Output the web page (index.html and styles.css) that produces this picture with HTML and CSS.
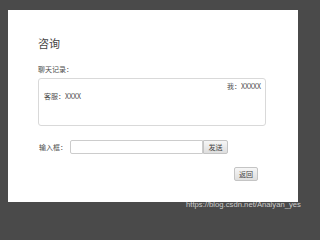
FILE: index.html
```html
<!DOCTYPE html>
<html lang="zh">
<head>
<meta charset="utf-8">
<link rel="stylesheet" href="styles.css">
</head>
<body>
<div class="panel">
  <div class="title">咨询</div>
  <div class="label">聊天记录：</div>
  <div class="chat">
    <div class="msg me">我：XXXXX</div>
    <div class="msg">客服：XXXX</div>
  </div>
  <div class="row">
    <span class="row-label">输入框：</span>
    <input class="input" type="text">
    <button class="btn">发送</button>
  </div>
  <button class="btn back">返回</button>
</div>
<div class="watermark">https://blog.csdn.net/Anaiyan_yes</div>
</body>
</html>
```
FILE: styles.css
```css
html, body {
  margin: 0;
  padding: 0;
  background: #4a4a4a;
  font-family: "Noto Sans CJK SC", "Liberation Sans", sans-serif;
  color: #4d4d4d;
}
body {
  position: relative;
  width: 307px;
  height: 213px;
  overflow: hidden;
}
.panel {
  margin: 10px 0 0 8px;
  width: 290px;
  height: 192px;
  background: #fff;
  box-sizing: border-box;
  padding: 26px 0 0 30px;
  display: flex;
  flex-direction: column;
  align-items: flex-start;
}
.title {
  font-size: 11px;
  line-height: 14px;
  color: #444;
}
.label {
  margin-top: 14px;
  font-size: 7px;
  line-height: 10px;
}
.chat {
  margin-top: 4px;
  width: 228px;
  height: 48px;
  box-sizing: border-box;
  border: 1px solid #d9d9d9;
  border-radius: 3px;
  padding: 2px 4px 0 5px;
  font-size: 7px;
  line-height: 10px;
}
.msg.me {
  text-align: right;
}
.row {
  margin-top: 14px;
  display: flex;
  align-items: center;
  height: 14px;
  font-size: 7px;
}
.row-label {
  width: 32px;
  padding-left: 1px;
  box-sizing: border-box;
}
.input {
  width: 133px;
  height: 14px;
  box-sizing: border-box;
  border: 1px solid #ccc;
  border-radius: 2px 0 0 2px;
  margin: 0;
  padding: 0 3px;
  font-size: 7px;
}
.btn {
  width: 25px;
  height: 14px;
  box-sizing: border-box;
  margin: 0;
  padding: 0;
  border: 1px solid #c4c4c4;
  border-radius: 0 2px 2px 0;
  background: linear-gradient(#f6f6f6, #dedede);
  font-family: "Noto Sans CJK SC", sans-serif;
  font-size: 7px;
  line-height: 12px;
  color: #444;
}
.back {
  margin-top: 13px;
  margin-left: 196px;
  width: 24px;
  border-radius: 2px;
}
.watermark {
  position: absolute;
  left: 186px;
  top: 200px;
  font-family: "Liberation Sans", sans-serif;
  font-size: 7.7px;
  line-height: 10px;
  color: rgba(235, 235, 235, 0.8);
  white-space: nowrap;
}
```
